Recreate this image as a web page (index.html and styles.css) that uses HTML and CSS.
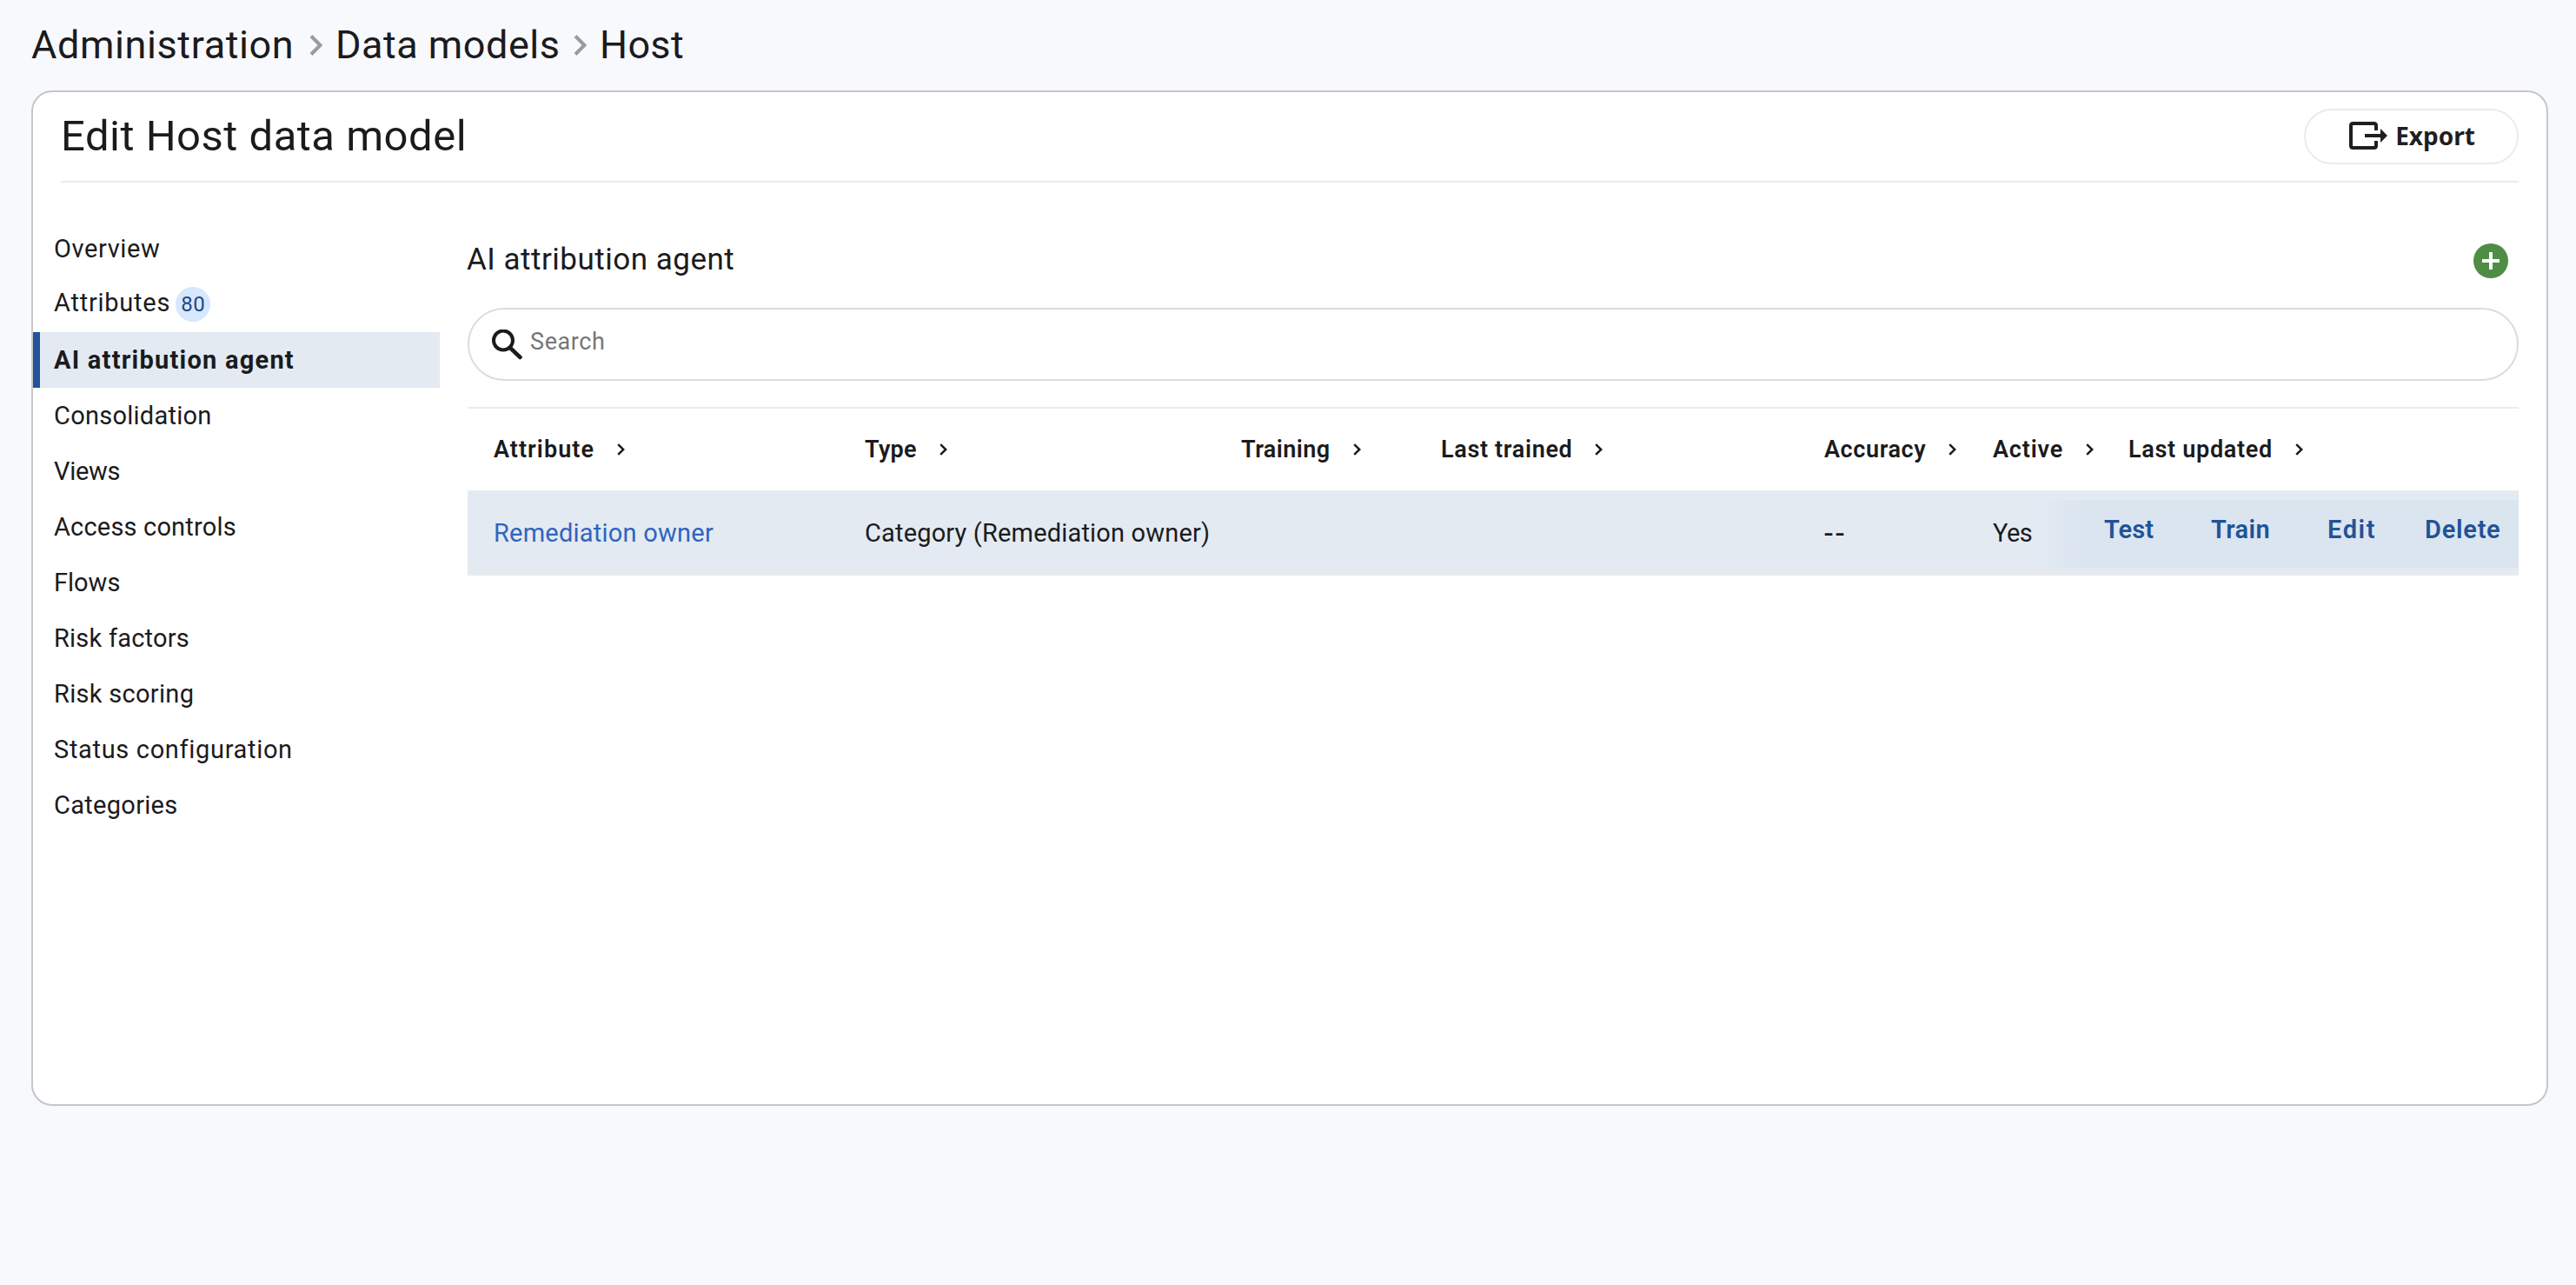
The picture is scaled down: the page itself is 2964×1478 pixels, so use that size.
FILE: index.html
```html
<!DOCTYPE html>
<html lang="en">
<head>
<meta charset="utf-8">
<title>Edit Host data model</title>
<link rel="stylesheet" href="styles.css">
</head>
<body>
<svg width="0" height="0" class="defs" aria-hidden="true">
  <symbol id="chev" viewBox="0 0 9 14"><path d="M1.2 1.2 7.2 7l-6 5.8" fill="none" stroke="currentColor" stroke-width="2.5"/></symbol>
</svg>

<nav class="crumbs">
  <div class="crumb"><span class="crumb-admin">Administration</span>
    <svg class="crumb-chev" viewBox="0 0 16 24"><path d="M2 1.5 12.5 12 2 22.500" fill="none" stroke="currentColor" stroke-width="4"/></svg></div>
  <div class="crumb"><span class="crumb-models">Data models</span>
    <svg class="crumb-chev" viewBox="0 0 16 24"><path d="M2 1.5 12.5 12 2 22.500" fill="none" stroke="currentColor" stroke-width="4"/></svg></div>
  <div class="crumb"><span class="crumb-host">Host</span></div>
</nav>

<main class="card">
  <header class="card-head">
    <h1>Edit Host data model</h1>
    <button class="export">
      <svg viewBox="0 0 44 32" width="44" height="32"><path d="M31 10V4.500Q31 2 28.500 2H4.500Q2 2 2 4.500V27.500Q2 30 4.500 30H28.500Q31 30 31 27.500V22" fill="none" stroke="currentColor" stroke-width="4"/><path d="M18 14H36V8L44 16 36 24V18H18z" fill="currentColor"/></svg>
      <span>Export</span>
    </button>
  </header>

  <div class="card-body">
    <ul class="side">
      <li class="s-overview">Overview</li>
      <li class="s-attributes">Attributes<span class="badge">80</span></li>
      <li class="active">AI attribution agent</li>
      <li class="s-consolidation">Consolidation</li>
      <li class="s-views">Views</li>
      <li class="s-access">Access controls</li>
      <li class="s-flows">Flows</li>
      <li class="s-factors">Risk factors</li>
      <li class="s-scoring">Risk scoring</li>
      <li class="s-status">Status configuration</li>
      <li class="s-categories">Categories</li>
    </ul>

    <section class="content">
      <div class="content-head">
        <h2>AI attribution agent</h2>
        <svg class="add" viewBox="0 0 40 40"><circle cx="20" cy="20" r="20" fill="#4f8d45"/><path d="M20 10V30M10 20H30" stroke="#fff" stroke-width="4"/></svg>
      </div>

      <div class="search">
        <svg viewBox="0 0 35 35" width="35" height="35"><circle cx="13" cy="12.500" r="11" fill="none" stroke="#1b1b1d" stroke-width="4"/><path d="M22 22 32.500 32" stroke="#1b1b1d" stroke-width="4.500" stroke-linecap="round"/></svg>
        <span>Search</span>
      </div>

      <div class="table">
        <div class="row head">
          <div><span class="h-attribute">Attribute</span><svg class="chev"><use href="#chev"/></svg></div>
          <div><span class="h-type">Type</span><svg class="chev"><use href="#chev"/></svg></div>
          <div><span class="h-training">Training</span><svg class="chev"><use href="#chev"/></svg></div>
          <div><span class="h-trained">Last trained</span><svg class="chev"><use href="#chev"/></svg></div>
          <div><span class="h-accuracy">Accuracy</span><svg class="chev"><use href="#chev"/></svg></div>
          <div><span class="h-active">Active</span><svg class="chev"><use href="#chev"/></svg></div>
          <div><span class="h-updated">Last updated</span><svg class="chev"><use href="#chev"/></svg></div>
        </div>
        <div class="row item">
          <div><a class="link">Remediation owner</a></div>
          <div><span class="type">Category (Remediation owner)</span></div>
          <div></div>
          <div></div>
          <div class="none">--</div>
          <div><span class="yes">Yes</span></div>
          <div></div>
          <div class="actions">
            <a class="a-test">Test</a><a class="a-train">Train</a><a class="a-edit">Edit</a><a class="a-delete">Delete</a>
          </div>
        </div>
      </div>
    </section>
  </div>
</main>
</body>
</html>
```
FILE: styles.css
```css
* { box-sizing: border-box; }
body {
  margin: 0;
  min-height: 1478px;
  background: #f8f9fd;
  color: #1b1b1d;
  font: 400 29px/1.2 Roboto, "Liberation Sans", sans-serif;
  white-space: nowrap;
}
.defs { display: block; height: 0; }
h1, h2, ul { margin: 0; padding: 0; }

/* Breadcrumb */
.crumbs {
  display: grid;
  grid-template-columns: 350px 304px auto;
  height: 104px;
  padding-left: 36px;
  font-size: 45px;
  font-weight: 430;
}
.crumb { display: flex; align-items: center; }
.crumb-admin { letter-spacing: .6px; }
.crumb-models { letter-spacing: .5px; }
.crumb-host { letter-spacing: .3px; }
.crumb-chev { width: 16px; height: 24px; margin-left: auto; margin-right: 14px; color: #9b9b9d; }

/* Card */
.card {
  height: 1168px;
  margin: 0 32px 0 36px;
  background: #fff;
  border: 2px solid #c5c5ca;
  border-radius: 24px;
}
.card-head {
  display: flex;
  align-items: center;
  justify-content: space-between;
  height: 104px;
  margin: 0 32px;
  border-bottom: 2px solid #ebebeb;
}
h1 { font-size: 49px; font-weight: 430; letter-spacing: .5px; }
.export {
  display: flex;
  align-items: center;
  justify-content: center;
  width: 247px;
  height: 64px;
  padding: 0 0 2px 2px;
  gap: 9px;
  background: #fff;
  border: 2px solid #ebebeb;
  border-radius: 32px;
  color: #1f1f1f;
  font: 700 28px/1 "Noto Sans", sans-serif;
}
.card-body { display: flex; }

/* Side navigation */
.side { width: 468px; padding-top: 44px; list-style: none; }
.side li { display: flex; align-items: center; height: 64px; padding: 1px 0 0 24px; }
.side .active {
  padding-left: 16px;
  background: #e3eaf2;
  border-left: 8px solid #215397;
  font-weight: 700;
  letter-spacing: 1.23px;
}
.s-overview { letter-spacing: .6px; }
.side .s-attributes { padding: 0 0 3px 24px; letter-spacing: .76px; }
.s-consolidation { letter-spacing: .25px; }
.s-views { letter-spacing: -.3px; }
.s-access { letter-spacing: .18px; }
.s-flows { letter-spacing: 0; }
.s-factors { letter-spacing: .22px; }
.s-scoring { letter-spacing: .3px; }
.s-status { letter-spacing: .67px; }
.s-categories { letter-spacing: .3px; }
.badge {
  width: 40px;
  height: 40px;
  margin: 3px 0 0 6px;
  background: #d6e7fe;
  border-radius: 50%;
  color: #1d4787;
  font-size: 24px;
  line-height: 40px;
  text-align: center;
  letter-spacing: .6px;
}

/* Content */
.content { flex: 1; margin: 70px 32px 0; }
.content-head { display: flex; align-items: center; justify-content: space-between; height: 40px; padding-right: 12px; }
h2 { margin-left: -1px; padding-bottom: 3px; font-size: 35px; font-weight: 400; letter-spacing: .5px; }
.add { width: 40px; height: 40px; }
.search {
  display: flex;
  align-items: center;
  gap: 9px;
  height: 84px;
  margin: 34px 0 30px;
  padding-left: 26px;
  border: 2px solid #dcdcdc;
  border-radius: 42px;
}
.search span { padding-bottom: 5px; color: #767676; font-size: 27px; letter-spacing: .6px; }

/* Table */
.table { border-top: 2px solid #ebebeb; }
.row {
  position: relative;
  display: grid;
  grid-template-columns: 427px 433px 230px 441px 194px 156px 1fr;
  align-items: center;
  height: 96px;
  padding: 1px 0 0 30px;
  border-bottom: 2px solid #ebebeb;
}
.head > div { display: flex; align-items: center; font-size: 27px; font-weight: 600; }
.chev { width: 9px; height: 14px; margin-left: 26px; }
.h-attribute { letter-spacing: 1.05px; }
.h-type { letter-spacing: .3px; }
.h-training { letter-spacing: .45px; }
.h-trained { letter-spacing: .67px; }
.h-accuracy { letter-spacing: .6px; }
.h-active { letter-spacing: .85px; }
.h-updated { letter-spacing: .7px; }
.item { background: #e3eaf2; }
.link { color: #2f64c0; letter-spacing: .23px; }
.type { letter-spacing: .17px; }
.none { font-size: 36px; line-height: 34px; letter-spacing: 3px; }
.yes { letter-spacing: -.5px; }
.row > .actions {
  position: absolute;
  top: 9px;
  right: 0;
  display: grid;
  grid-template-columns: 123px 134px 112px auto;
  align-items: center;
  width: 558px;
  height: 78px;
  padding: 0 0 9px 81px;
  background: linear-gradient(90deg, rgba(219, 229, 240, 0), #dbe5f0 60px);
  color: #215397;
  font-weight: 600;
}
.a-test { letter-spacing: .1px; }
.a-train { letter-spacing: .4px; }
.a-edit { letter-spacing: 1.6px; }
.a-delete { letter-spacing: .75px; }
```
